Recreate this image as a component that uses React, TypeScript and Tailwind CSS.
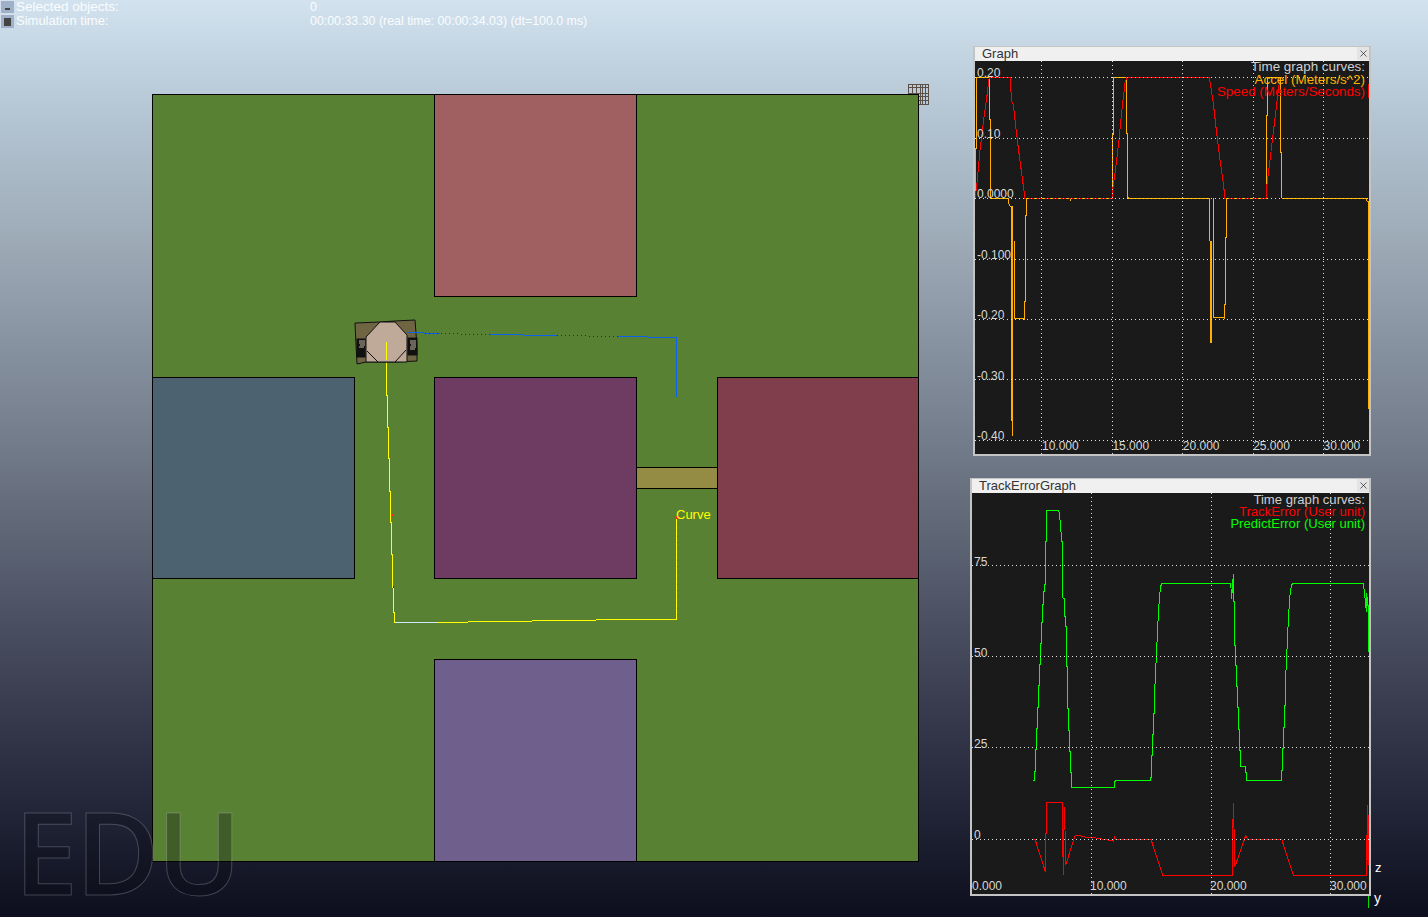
import { X } from "lucide-react";

// points read off the 3x crops: origin + crop px / 3
const z = (ox: number, oy: number, pts: number[][]) =>
  pts.map(([x, y]) => `${ox + x / 3},${oy + y / 3}`).join(" ");

const flat = (pts: number[][]) => pts.map((p) => p.join(",")).join(" ");

const accel = [
  [[975, 198], [975, 148], [976.7, 148], [976.7, 77], [989.3, 77], [989.3, 119], [990.7, 119], [990.7, 198], [1008.3, 198], [1008.3, 203], [1010, 206], [1011, 206], [1011, 421]],
  [[1012, 421], [1012, 436]],
  [[1014, 241], [1014, 318], [1024, 319], [1024, 301], [1025, 301], [1025, 215], [1026, 215], [1026, 198], [1070, 198], [1070.5, 201], [1071, 198], [1112, 198], [1112, 134], [1113, 134], [1113, 77], [1126, 77], [1126, 133], [1127, 133], [1127, 196], [1128.5, 198], [1209, 198], [1209, 241]],
  [[1213, 198], [1213, 317], [1224, 318], [1224, 304], [1225, 304], [1225, 237], [1226, 237], [1226, 198], [1266, 198], [1266, 115], [1267, 115], [1267, 77], [1280, 77], [1280, 152], [1281, 152], [1281, 196], [1282, 198], [1366, 198], [1367, 201], [1368, 201], [1368, 261]],
];

const speed = [
  z(970, 40, [[15, 475], [20, 440], [25, 385], [30, 330], [35, 290], [42, 230], [50, 175], [56, 125], [58, 112], [120, 112], [125, 183], [130, 195], [135, 240], [145, 325], [155, 400], [165, 475], [427, 475], [427, 455], [435, 400], [447, 300], [455, 215], [465, 130], [470, 112]]),
  z(1170, 40, [[118, 112], [130, 190], [140, 280], [150, 360], [160, 430], [165, 475], [288, 475], [290, 440], [300, 360], [312, 260], [325, 150], [330, 112]]),
].join(" ");

const predict = [
  z(965, 695, [[205, 257], [208, 257], [208, 228], [211, 228], [211, 162], [214, 162], [214, 100], [217, 100], [217, 37], [220, 37]]),
  z(965, 475, [[220, 630], [223, 630], [223, 568], [226, 568], [226, 505], [229, 505], [229, 442], [232, 442], [232, 388], [235, 388], [235, 350], [238, 350], [238, 328], [241, 328], [241, 200], [244, 200], [244, 105], [281, 105], [284, 125], [287, 155], [290, 200], [293, 200], [293, 368], [297, 370], [297, 425], [300, 425], [300, 455], [303, 455], [303, 573], [307, 573], [307, 660]]),
  z(965, 695, [[307, 40], [310, 40], [310, 105], [314, 105], [314, 168], [317, 168], [317, 232], [320, 232], [320, 277], [449, 277], [449, 258], [452, 258], [452, 256], [556, 256], [556, 246], [559, 246], [559, 182], [562, 182], [562, 118], [565, 118], [565, 54], [568, 54], [568, 0]]),
  z(965, 475, [[568, 660], [569, 648], [572, 585], [575, 522], [578, 460], [581, 400], [584, 360], [587, 335], [590, 325], [630, 325]]),
  z(1175, 475, [[0, 325], [165, 325], [168, 340], [170, 372], [172, 340], [175, 297], [175, 378], [178, 378], [178, 510], [181, 510], [181, 572], [185, 572], [185, 635], [188, 635], [188, 660]]),
  z(965, 695, [[817, 0], [817, 38], [820, 38], [820, 103], [823, 103], [823, 167], [826, 167], [826, 214], [841, 214], [841, 232], [844, 232], [844, 256], [949, 256], [949, 225], [952, 225], [952, 160], [955, 160], [955, 96], [958, 96], [958, 32], [961, 32], [961, 0]]),
  z(1175, 475, [[331, 660], [331, 628], [334, 565], [337, 500], [340, 437], [343, 385], [346, 350], [350, 330], [353, 325], [565, 325], [568, 350], [571, 380], [574, 410], [575, 355], [578, 390], [580, 390], [580, 530]]),
].join(" ");

const trackErr = z(965, 695, [[205, 433], [210, 433], [241, 530], [241, 415], [244, 415], [244, 322], [291, 322], [291, 485], [293, 420], [295, 540], [298, 335], [300, 405], [302, 510], [330, 422], [345, 422], [365, 427], [385, 428], [405, 431], [425, 434], [445, 438], [449, 427], [452, 433], [558, 433], [593, 541], [803, 541], [803, 423], [805, 325], [807, 400], [809, 517], [842, 422], [848, 433], [950, 433], [985, 541], [1204, 541], [1205, 470], [1208, 330], [1210, 510]]);

function GridLines({ xs, ys, box }: { xs: number[]; ys: number[]; box: number[] }) {
  return (
    <g stroke="#e0e0e0" strokeDasharray="1 3" strokeWidth="1">
      {xs.map((x) => (
        <line key={x} x1={x} x2={x} y1={box[1]} y2={box[3]} />
      ))}
      {ys.map((y) => (
        <line key={y} x1={box[0]} x2={box[2]} y1={y} y2={y} />
      ))}
    </g>
  );
}

function TitleBar({ title }: { title: string }) {
  return (
    <div className="flex h-[14px] items-start justify-between bg-[#f0f0f0] pl-[7px] text-[13px] leading-[13px] text-[#333]">
      <span>{title}</span>
      <span className="flex h-[13px] w-[12px] items-center justify-center bg-[#e4e4e4] text-[#222]">
        <X size={11} strokeWidth={1.5} />
      </span>
    </div>
  );
}

function Axis({ labels, className }: { labels: string[]; className: string }) {
  return (
    <div className={`absolute grid text-[12px] leading-none text-[#d8d8d8] ${className}`}>
      {labels.map((l) => (
        <span key={l}>{l}</span>
      ))}
    </div>
  );
}

function Legend({ lines, className }: { lines: [string, string][]; className: string }) {
  return (
    <div className={`absolute flex flex-col items-end ${className}`}>
      {lines.map(([label, color]) => (
        <span key={label} className={color}>
          {label}
        </span>
      ))}
    </div>
  );
}

export default function App() {
  return (
    <div className="relative h-[917px] w-full overflow-hidden bg-[linear-gradient(180deg,#d2e2ef_0%,#b5c6d4_12%,#9ca9b5_27%,#6f7887_50%,#3a3e50_76%,#24283a_87%,#0d0e1d_100%)] font-['Liberation_Sans',sans-serif]">
      {/* Top info rows */}
      <div className="flex flex-col leading-[14px] text-white/90">
        <div className="flex h-[13px] items-center">
          <span className="flex h-[13px] w-[14px] items-end justify-center border-t border-l border-[#d8e2ee] border-r-[#6a7690] border-b-[#6a7690] bg-[#9fb0c9] pb-[3px]">
            <span className="h-[2px] w-[5px] bg-[#444]" />
          </span>
          <span className="ml-[2px] w-[294px] text-[13.5px]">Selected objects:</span>
          <span className="text-[12.4px]">0</span>
        </div>
        <div className="mt-px flex h-[14px] items-center">
          <span className="flex h-[14px] w-[14px] items-center justify-center border-t border-l border-[#d8e2ee] border-r-[#6a7690] border-b-[#6a7690] bg-[#9fb0c9]">
            <span className="h-[8px] w-[7px] bg-[#444]" />
          </span>
          <span className="ml-[2px] w-[294px] text-[13px]">Simulation time:</span>
          <span className="text-[12.4px]">00:00:33.30 (real time: 00:00:34.03) (dt=100.0 ms)</span>
        </div>
      </div>

      {/* Grid gizmo, partly behind the arena */}
      <svg className="absolute left-[908px] top-[84px] h-[21px] w-[21px]" viewBox="0 0 21 21" fill="none" stroke="#5c5048" strokeWidth="1" shapeRendering="crispEdges">
        <path d="M.5 .5H20.5V20.5H.5ZM.5 3.5H20.5M.5 9.5H20.5M.5 12.5H20.5M.5 16.5H20.5M4.5 .5V20.5M8.5 .5V20.5M12.5 .5V20.5M14.5 .5V20.5M17.5 .5V20.5" />
      </svg>

      {/* Arena */}
      <div className="absolute left-[152px] top-[94px] grid h-[768px] w-[767px] grid-cols-[282px_203px_80px_202px] grid-rows-[283px_282px_203px] bg-[#588133] shadow-[inset_0_0_0_1px_#000]">
        <div className="col-start-2 row-start-1 h-[203px] border border-black bg-[#a05f60]" />
        <div className="col-start-1 row-start-2 h-[202px] w-[203px] border border-black bg-[#4d6270]" />
        <div className="col-start-2 row-start-2 h-[202px] border border-black bg-[#6e3b62]" />
        <div className="col-start-3 row-start-2 mt-[90px] h-[22px] border-y border-black bg-[#948c45]" />
        <div className="col-start-4 row-start-2 h-[202px] border border-black bg-[#803e4c]" />
        <div className="col-start-2 row-start-3 border border-black bg-[#6f5f8c]" />
      </div>

      {/* Trajectories and robot, drawn in page coordinates */}
      <svg className="absolute left-0 top-0 h-[917px] w-[1428px]" viewBox="0 0 1428 917" fill="none" shapeRendering="crispEdges">
        <polyline points="677.5,518 677.5,619" stroke="#e02020" strokeWidth="1" strokeDasharray="1 5" />
        <polyline points="386.5,360 386.5,395 387.5,395 387.5,427 388.5,427 388.5,458 389.5,458 389.5,491 390.5,491 390.5,522 391.5,522 391.5,554 392.5,554 392.5,587 393.5,587 393.5,612 394.5,612 394.5,622.5 437,622.5 500,621.5 565,620.5 628,619.5 676.5,619.5 676.5,518" stroke="#ffff00" strokeWidth="1" />
        <polyline points="395,622.5 437,622.5" stroke="#cfe9ff" strokeWidth="1" />
        <rect x="676" y="516" width="3" height="3" fill="#ff2020" />
        <rect x="393" y="586" width="1" height="2" fill="#1020e0" />
        <rect x="392" y="514" width="1" height="2" fill="#ff2020" />

        {/* Robot */}
        <g shapeRendering="auto" stroke="#111" strokeWidth="1">
          <polygon points="355,323 380,322 395,321 415,320 416,333 417,350 417,361 395,362 366,362 357,364 356,345" fill="#6f6543" />
          <rect x="357" y="339" width="8" height="18" fill="#111" />
          <rect x="408" y="338" width="9" height="17" fill="#111" />
          <polygon points="366,350 366,337 380,322 395,322 407,335 407,362 366,362" fill="#bfa999" />
          <path d="M359 341h6M359 343h6M360 345h5M359 347h5M410 341h6M410 343h6M411 345h5M410 347h6M410 349h5" stroke="#c4b8a4" />
          <path d="M367 351l11 11M406 350l-11 12" stroke="#111" />
        </g>
        <polyline points="386.5,342 386.5,360" stroke="#ffff00" strokeWidth="1" />
        <polyline points="407,332.5 440,333.5" stroke="#0a62ee" strokeWidth="1" />
        <polyline points="425,333.5 490,334.5" stroke="#1f3a14" strokeWidth="1" strokeDasharray="1 3" />
        <polyline points="490,334.5 557,335.5" stroke="#0a62ee" strokeWidth="1" />
        <polyline points="557,335.5 618,336.5" stroke="#1f3a14" strokeWidth="1" strokeDasharray="1 3" />
        <polyline points="618,336.5 676.5,337.5 676.5,397" stroke="#0a62ee" strokeWidth="1" />
      </svg>
      <span className="absolute left-[676px] top-[508px] text-[13px] leading-[14px] text-[#ffff00]">Curve</span>

      {/* Watermark */}
      <span className="absolute left-[14px] top-[791px] font-['Open_Sans',sans-serif] text-[115px] leading-[120px] font-semibold tracking-[-3px] text-[rgba(10,10,20,0.3)] [-webkit-text-stroke:1px_rgba(190,190,200,0.28)]">
        EDU
      </span>

      {/* Graph window */}
      <div className="absolute left-[973px] top-[46px] h-[410px] w-[398px] border-2 border-t border-[#c4c4c4] bg-[#1a1a1a]">
        <TitleBar title="Graph" />
        <svg className="absolute left-0 top-[14px] h-[393px] w-[394px]" viewBox="975 61 394 393" fill="none" shapeRendering="crispEdges">
          {accel.map((seg) => (
            <polyline key={seg[0].join()} points={flat(seg)} stroke="#ffb000" strokeWidth="1" />
          ))}
          <polyline points="1011.5,206 1011.5,421" stroke="#ffb000" strokeWidth="2" />
          <polyline points="1211,241 1211,343" stroke="#ffb000" strokeWidth="2" />
          <polyline points="1369,261 1369,409" stroke="#ffb000" strokeWidth="2" />
          <polyline points={speed} stroke="#ff0000" strokeWidth="1" />
          <polyline points="1026,198 1112,198" stroke="#ffb000" strokeWidth="1" strokeDasharray="3 5" />
          <polyline points="1226,198 1266,198" stroke="#ffb000" strokeWidth="1" strokeDasharray="3 5" />
          <polyline points="1368,84 1368,98" stroke="#ff0000" strokeWidth="1" />
          <GridLines xs={[1041, 1112, 1182, 1253, 1323]} ys={[77, 138, 198, 259, 319, 379, 440]} box={[975, 61, 1369, 454]} />
        </svg>
        <Axis
          className="left-[2px] top-[20.3px] auto-rows-[60.5px]"
          labels={["0.20", "0.10", "0.0000", "-0.100", "-0.20", "-0.30", "-0.40"]}
        />
        <Axis
          className="left-[67px] top-[393px] grid-cols-[repeat(5,70.4px)]"
          labels={["10.000", "15.000", "20.000", "25.000", "30.000"]}
        />
        <Legend
          className="right-[4px] top-[14px] text-[13.4px] leading-[12.5px]"
          lines={[
            ["Time graph curves:", "text-[#d0d0d0]"],
            ["Accel (Meters/s^2)", "text-[#ffb000]"],
            ["Speed (Meters/Seconds)", "text-[#ff0000]"],
          ]}
        />
      </div>

      {/* TrackErrorGraph window */}
      <div className="absolute left-[970px] top-[478px] h-[418px] w-[401px] border-2 border-t border-[#c4c4c4] bg-[#1a1a1a]">
        <TitleBar title="TrackErrorGraph" />
        <svg className="absolute left-0 top-[14px] h-[401px] w-[397px]" viewBox="972 493 397 401" fill="none" shapeRendering="crispEdges">
          <polyline points={predict} stroke="#00ff00" strokeWidth="1" />
          <polyline points={trackErr} stroke="#ff0000" strokeWidth="1" />
          <polyline points="1368,815 1368,860" stroke="#ff0000" strokeWidth="2" />
          <GridLines xs={[1091, 1211, 1330]} ys={[565, 656, 747, 839]} box={[972, 493, 1369, 894]} />
        </svg>
        <Axis className="left-[2px] top-[77px] auto-rows-[91px]" labels={["75", "50", "25", "0"]} />
        <Axis
          className="left-0 top-[401px] grid-cols-[118px_120px_120px_auto]"
          labels={["0.000", "10.000", "20.000", "30.000"]}
        />
        <Legend
          className="right-[4px] top-[15px] text-[13.1px] leading-[12px]"
          lines={[
            ["Time graph curves:", "text-[#d0d0d0]"],
            ["TrackError (User unit)", "text-[#ff0000]"],
            ["PredictError (User unit)", "text-[#00ff00]"],
          ]}
        />
      </div>

      {/* Axis gizmo */}
      <div className="absolute left-[1368px] top-[896px] h-[12px] w-px bg-[#00e000]" />
      <span className="absolute left-[1375px] top-[861px] text-[13px] leading-[14px] text-white">z</span>
      <span className="absolute left-[1374px] top-[891px] text-[14px] leading-[14px] text-white">y</span>
    </div>
  );
}
